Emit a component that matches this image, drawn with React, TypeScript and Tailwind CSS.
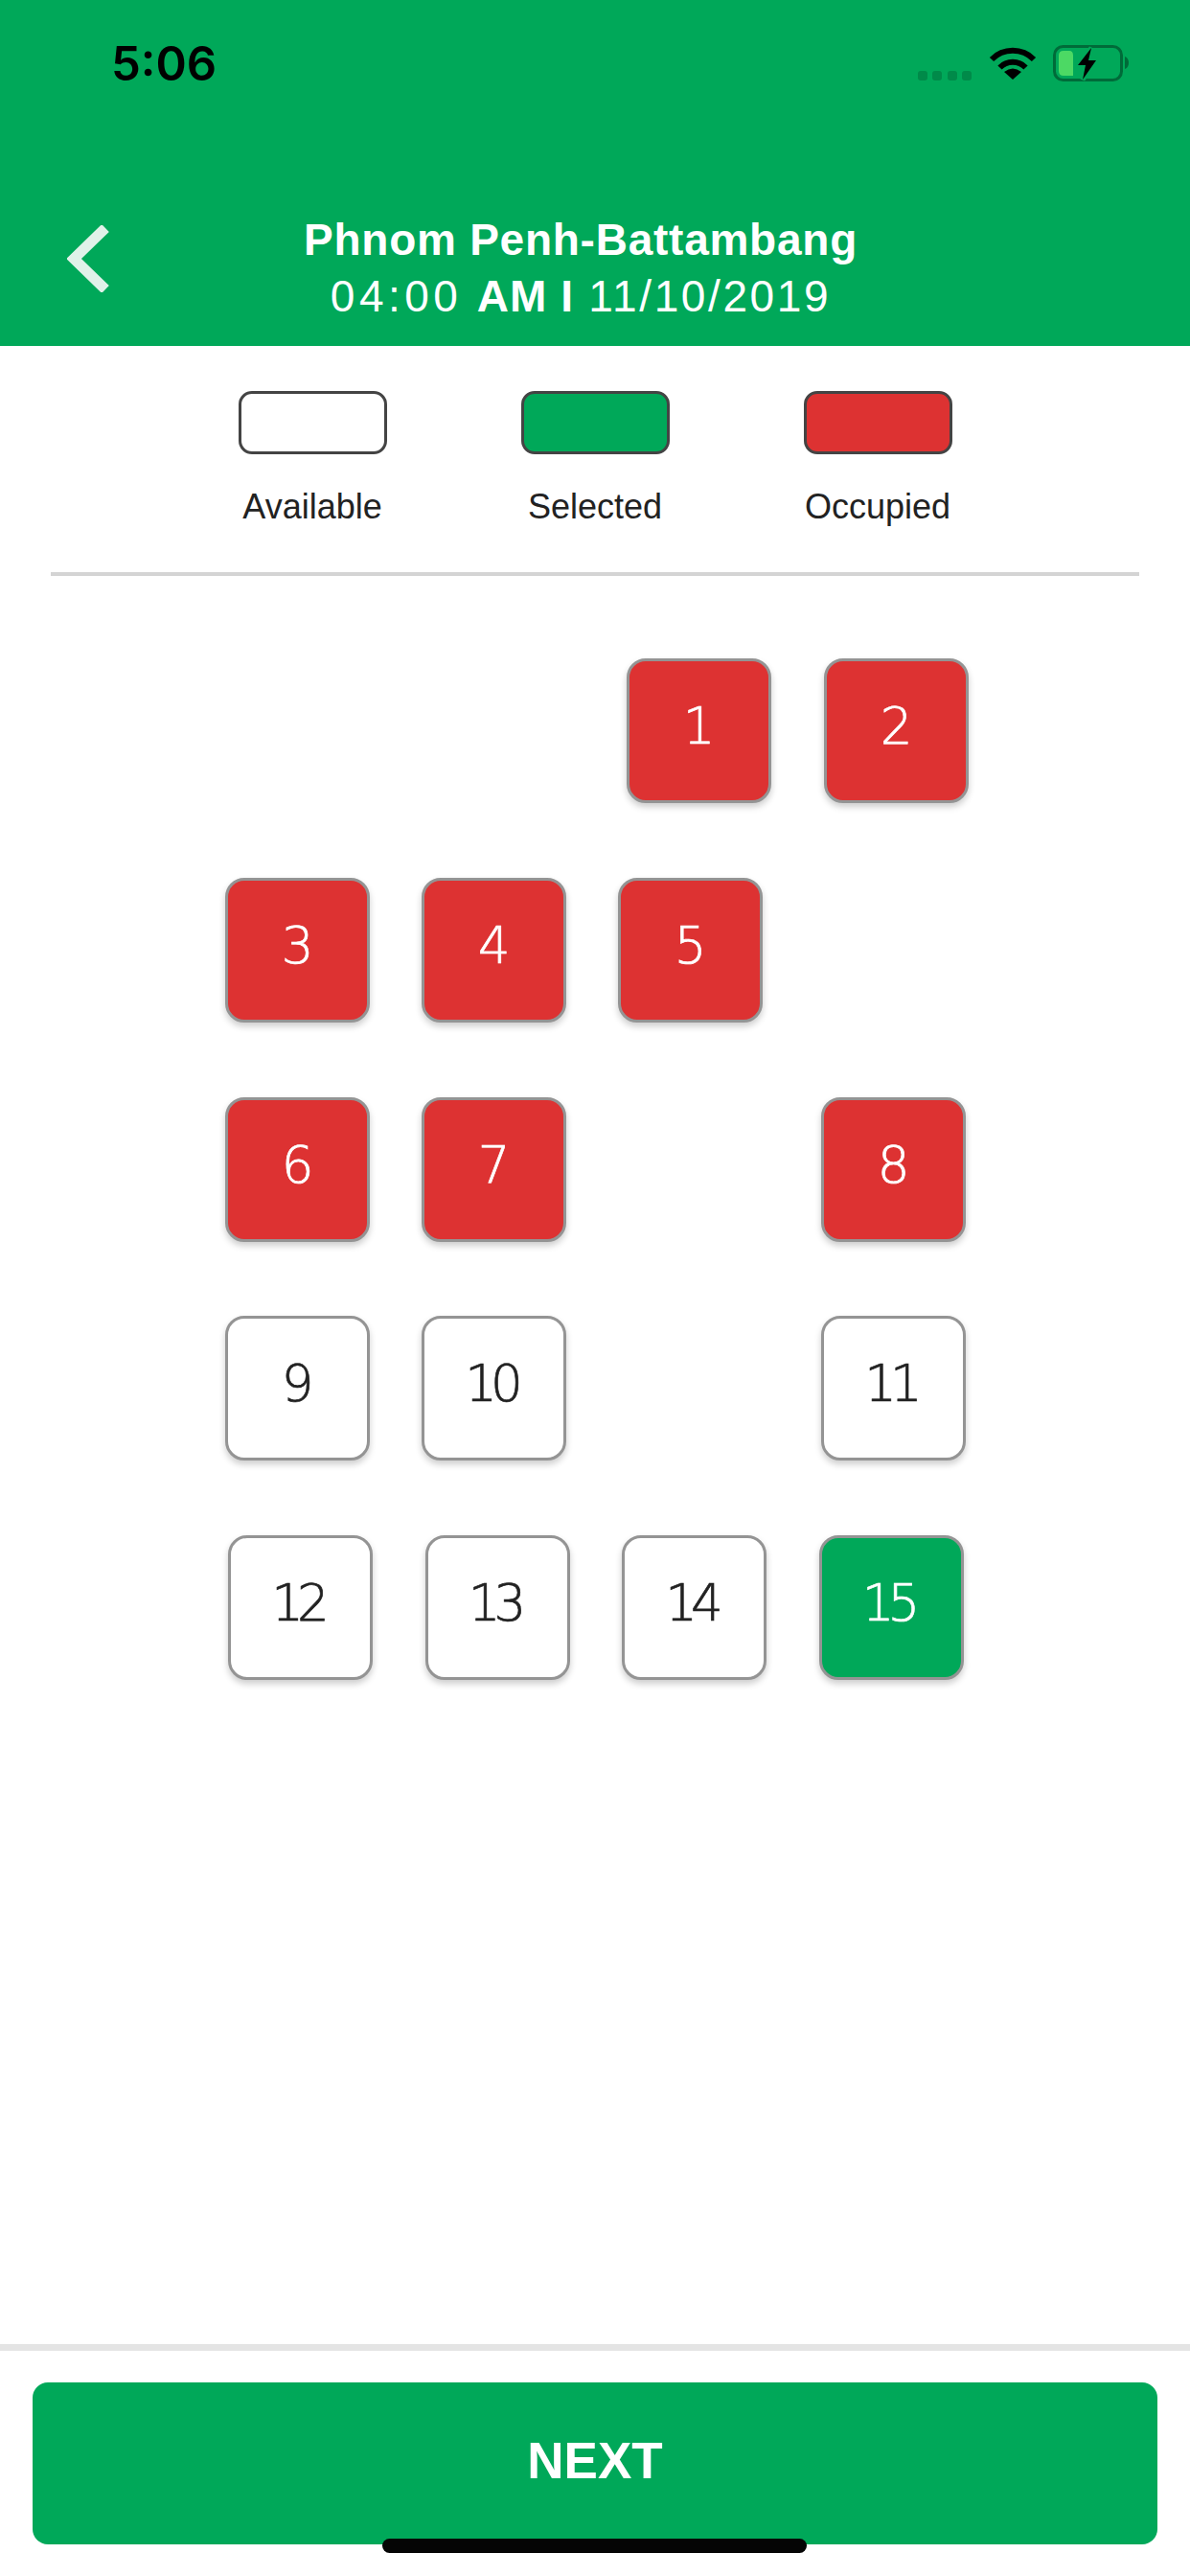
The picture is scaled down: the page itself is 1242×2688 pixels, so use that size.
import React from 'react';

type SeatState = 'available' | 'selected' | 'occupied';

const seatStyles: Record<SeatState, string> = {
  available: 'bg-white text-[#222222]',
  selected: 'bg-[#00a859] text-white',
  occupied: 'bg-[#dd3232] text-white',
};

const Seat: React.FC<{ n: number; state: SeatState; className?: string }> = ({ n, state, className }) => (
  <div
    className={`flex h-[151px] w-[151px] shrink-0 items-center justify-center rounded-[20px] border-[3px] border-[#949494] pr-[7px] pb-[10px] font-['DejaVu_Sans',sans-serif] text-[53px] leading-none font-extralight tracking-[-7px] shadow-[0_4px_7px_rgba(0,0,0,0.2)] [-webkit-text-stroke:0.7px_currentColor] ${seatStyles[state]} ${className ?? ''}`}
  >
    {n}
  </div>
);

const Legend: React.FC<{ label: string; box: string }> = ({ label, box }) => (
  <div className="flex w-[295px] flex-col items-center">
    <div className={`h-[66px] w-[155px] rounded-[14px] border-[3px] border-[#444444] ${box}`} />
    <span className="mt-[34px] text-[36px] leading-[42px] text-[#222222]">{label}</span>
  </div>
);

const StatusIcons = () => (
  <div className="flex items-start">
    <div className="mt-[27px] flex gap-[5.5px]">
      <div className="h-[10px] w-[10px] rounded-[3px] bg-[#008a49]" />
      <div className="h-[10px] w-[10px] rounded-[3px] bg-[#008a49]" />
      <div className="h-[10px] w-[10px] rounded-[3px] bg-[#008a49]" />
      <div className="h-[10px] w-[10px] rounded-[3px] bg-[#008a49]" />
    </div>
    <svg className="ml-[18px]" width="50" height="38" viewBox="0 0 50 38">
      <path d="M3 15A31 31 0 0 1 47 15" fill="none" stroke="#000" strokeWidth="6" />
      <path d="M11.5 23.5A19 19 0 0 1 38.5 23.5" fill="none" stroke="#000" strokeWidth="6" />
      <path d="M25 36L16 28Q25 21 34 28Z" fill="#000" />
    </svg>
    <svg className="ml-[17px]" width="80" height="38" viewBox="0 0 80 38">
      <rect x="1.5" y="1.5" width="70" height="35" rx="9" fill="none" stroke="#006b39" strokeWidth="3" />
      <path d="M75 12C78 13 79 16 79 18.500C79 21 78 24 75 25Z" fill="#006b39" />
      <path d="M6 11Q6 6 11 6H17Q21 6 21 11V32H11Q6 32 6 27Z" fill="#4cd964" />
      <path d="M40 3L26 21H34L31 36L45 16H37Z" fill="#000" stroke="#00a859" strokeWidth="5" paintOrder="stroke" />
    </svg>
  </div>
);

export default function App() {
  return (
    <div className="relative flex h-[2688px] w-full flex-col overflow-hidden bg-white font-['Liberation_Sans',Arial,sans-serif]">
      {/* Header */}
      <header className="flex h-[361px] shrink-0 flex-col bg-[#00a859]">
        <div className="flex items-start justify-between pt-[47px] pr-[63px] pl-[116px]">
          <span className="mt-[1px] font-['Inter',sans-serif] text-[49px] leading-[38px] font-semibold text-black">5:06</span>
          <StatusIcons />
        </div>
        <div className="mt-[148px] flex items-start pr-[144px] pl-[70px]">
          <svg className="mt-[1px] shrink-0" width="44" height="70" viewBox="0 0 44 70">
            <path d="M40 3L7 35L40 67" fill="none" stroke="#e0f2e9" strokeWidth="11" />
          </svg>
          <div className="-mt-[12px] flex-1 text-center text-white">
            <div className="text-[46px] leading-[56px] font-bold tracking-[0.75px]">Phnom Penh-Battambang</div>
            <div className="mt-[3px] text-[46px] leading-[56px] tracking-[2.6px]">
              <span className="tracking-[4.500px]">04:00</span> <b className="tracking-[1px]">AM I</b> 11/10/2019
            </div>
          </div>
        </div>
      </header>

      {/* Legend */}
      <div className="flex justify-center pt-[47px]">
        <Legend label="Available" box="bg-white" />
        <Legend label="Selected" box="bg-[#00a859]" />
        <Legend label="Occupied" box="bg-[#dd3232]" />
      </div>
      <div className="mx-[53px] mt-[47px] h-[4px] bg-[#d4d4d4]" />

      {/* Seats */}
      <div className="flex flex-col gap-[77.75px] pt-[86px]">
        <div className="flex gap-[55px] pl-[654px]">
          <Seat n={1} state="occupied" />
          <Seat n={2} state="occupied" />
        </div>
        <div className="flex gap-[54px] pl-[235px]">
          <Seat n={3} state="occupied" />
          <Seat n={4} state="occupied" />
          <Seat n={5} state="occupied" />
        </div>
        <div className="flex gap-[54px] pl-[235px]">
          <Seat n={6} state="occupied" />
          <Seat n={7} state="occupied" />
          <Seat n={8} state="occupied" className="ml-[212px]" />
        </div>
        <div className="flex gap-[54px] pl-[235px]">
          <Seat n={9} state="available" />
          <Seat n={10} state="available" />
          <Seat n={11} state="available" className="ml-[212px]" />
        </div>
        <div className="flex gap-[54.500px] pl-[238px]">
          <Seat n={12} state="available" />
          <Seat n={13} state="available" />
          <Seat n={14} state="available" />
          <Seat n={15} state="selected" />
        </div>
      </div>

      {/* Footer */}
      <div className="mt-auto h-[7px] bg-[#e4e4e4]" />
      <div className="px-[34px] pt-[33px] pb-[33px]">
        <button className="flex h-[169px] w-full items-center justify-center rounded-[16px] bg-[#00a859] pb-[5px] text-[53px] font-bold text-white">
          NEXT
        </button>
      </div>

      {/* Home indicator */}
      <div className="absolute bottom-[24px] left-[399px] h-[15px] w-[443px] rounded-[8px] bg-[#050505]" />
    </div>
  );
}
